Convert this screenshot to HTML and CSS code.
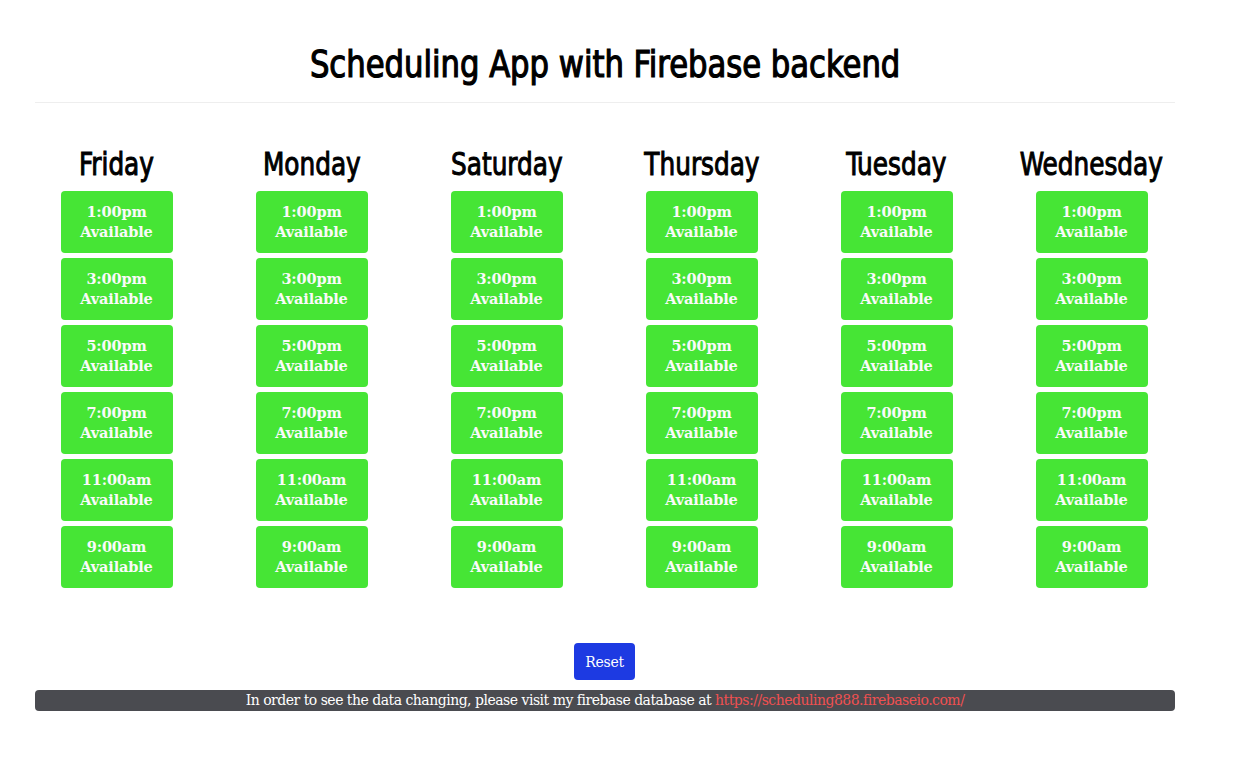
FILE: index.html
```html
<!DOCTYPE html>
<html>
<head>
<meta charset="utf-8">
<link rel="stylesheet" href="styles.css">
</head>
<body>
<div class="container">
  <header class="title-bar">
    <h1 class="title"><span class="narrow">Scheduling App with Firebase backend</span></h1>
  </header>
  <div class="days">
    <div class="day">
      <h2 class="day-name"><span class="narrow-day">Friday</span></h2>
      <div class="slot">1:00pm<br>Available</div>
      <div class="slot">3:00pm<br>Available</div>
      <div class="slot">5:00pm<br>Available</div>
      <div class="slot">7:00pm<br>Available</div>
      <div class="slot">11:00am<br>Available</div>
      <div class="slot">9:00am<br>Available</div>
    </div>
    <div class="day">
      <h2 class="day-name"><span class="narrow-day">Monday</span></h2>
      <div class="slot">1:00pm<br>Available</div>
      <div class="slot">3:00pm<br>Available</div>
      <div class="slot">5:00pm<br>Available</div>
      <div class="slot">7:00pm<br>Available</div>
      <div class="slot">11:00am<br>Available</div>
      <div class="slot">9:00am<br>Available</div>
    </div>
    <div class="day">
      <h2 class="day-name"><span class="narrow-day">Saturday</span></h2>
      <div class="slot">1:00pm<br>Available</div>
      <div class="slot">3:00pm<br>Available</div>
      <div class="slot">5:00pm<br>Available</div>
      <div class="slot">7:00pm<br>Available</div>
      <div class="slot">11:00am<br>Available</div>
      <div class="slot">9:00am<br>Available</div>
    </div>
    <div class="day">
      <h2 class="day-name"><span class="narrow-day">Thursday</span></h2>
      <div class="slot">1:00pm<br>Available</div>
      <div class="slot">3:00pm<br>Available</div>
      <div class="slot">5:00pm<br>Available</div>
      <div class="slot">7:00pm<br>Available</div>
      <div class="slot">11:00am<br>Available</div>
      <div class="slot">9:00am<br>Available</div>
    </div>
    <div class="day">
      <h2 class="day-name"><span class="narrow-day">Tuesday</span></h2>
      <div class="slot">1:00pm<br>Available</div>
      <div class="slot">3:00pm<br>Available</div>
      <div class="slot">5:00pm<br>Available</div>
      <div class="slot">7:00pm<br>Available</div>
      <div class="slot">11:00am<br>Available</div>
      <div class="slot">9:00am<br>Available</div>
    </div>
    <div class="day">
      <h2 class="day-name"><span class="narrow-day">Wednesday</span></h2>
      <div class="slot">1:00pm<br>Available</div>
      <div class="slot">3:00pm<br>Available</div>
      <div class="slot">5:00pm<br>Available</div>
      <div class="slot">7:00pm<br>Available</div>
      <div class="slot">11:00am<br>Available</div>
      <div class="slot">9:00am<br>Available</div>
    </div>
  </div>
  <div class="actions">
    <button class="reset">Reset</button>
  </div>
  <footer class="note">In order to see the data changing, please visit my firebase database at <a href="#">https://scheduling888.firebaseio.com/</a></footer>
</div>
</body>
</html>
```

FILE: styles.css
```css
* { box-sizing: border-box; }
body {
  margin: 0;
  background: #fff;
  font-family: "DejaVu Serif", Georgia, serif;
  color: #000;
}
.container {
  width: 1140px;
  margin: 0 0 0 35px;
}
.title-bar {
  border-bottom: 1px solid #eeeeee;
  padding-top: 40px;
  height: 103px;
}
.title {
  margin: 0;
  text-align: center;
  font-family: "DejaVu Sans Condensed", "DejaVu Sans", sans-serif;
  font-stretch: condensed;
  font-weight: 400;
  -webkit-text-stroke: 1.2px #000;
  font-size: 38px;
  line-height: 48px;
}
.narrow {
  display: inline-block;
  transform: scaleX(0.897);
}
.days {
  display: flex;
  margin: 0 -14px 0 -16px;
  padding-top: 41px;
}
.day {
  width: 195px;
  display: flex;
  flex-direction: column;
  align-items: center;
  gap: 5px;
}
.day-name {
  margin: 0 0 2px;
  font-family: "DejaVu Sans Condensed", "DejaVu Sans", sans-serif;
  font-stretch: condensed;
  font-weight: 400;
  -webkit-text-stroke: 1px #000;
  font-size: 32px;
  line-height: 40px;
}
.narrow-day {
  display: inline-block;
  transform: scaleX(0.86);
}
.slot {
  width: 112px;
  height: 62px;
  background: #46e535;
  border-radius: 4px;
  color: #fafafa;
  font-weight: 700;
  font-size: 14.5px;
  line-height: 20px;
  text-align: center;
  padding-top: 11px;
  letter-spacing: -0.15px;
}
.actions {
  display: flex;
  justify-content: center;
  padding-top: 55px;
  padding-right: 1px;
}
.reset {
  width: 61px;
  height: 37px;
  background: #1d3ae2;
  color: #fff;
  border: none;
  border-radius: 4px;
  font-family: "DejaVu Serif", Georgia, serif;
  font-size: 14px;
  padding: 0;
  letter-spacing: -0.3px;
}
.note {
  margin-top: 10px;
  height: 21px;
  background: #4a4b50;
  border-radius: 4px;
  color: #fff;
  text-align: center;
  font-size: 14px;
  line-height: 21px;
  letter-spacing: -0.5px;
}
.note a {
  color: #f05050;
  text-decoration: none;
}
```
